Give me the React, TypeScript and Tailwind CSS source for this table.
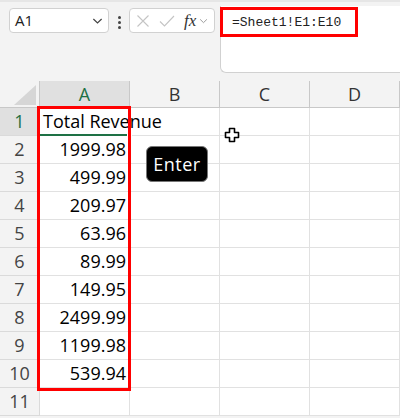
import React from "react";

const cols = ["A", "B", "C", "D"];
const values = ["Total Revenue", "1999.98", "499.99", "209.97", "63.96", "89.99", "149.95", "2499.99", "1199.98", "539.94", ""];

function Chevron({ className }: { className?: string }) {
  return (
    <svg viewBox="0 0 12 8" className={className} fill="none" stroke="currentColor" strokeWidth="1.3">
      <path d="M1.5 1.8 L6 6.2 L10.5 1.8" />
    </svg>
  );
}

export default function App() {
  return (
    <div className="relative w-[400px] h-[418px] overflow-hidden bg-[#f3f3f3] font-['Open_Sans',sans-serif] text-[#000]">
      {/* formula bar area */}
      <div className="h-[81px] flex items-start border-t-2 border-[#e6e6e6]">
        <div className="mt-[6px] ml-[9px] w-[100px] h-[25px] bg-white border border-[#d1d1d1] rounded-[4px] flex items-center justify-between pl-[5px] pr-[5px]">
          <span className="text-[15px] leading-none text-[#222]">A1</span>
          <Chevron className="w-[11px] h-[8px] text-[#444]" />
        </div>
        <div className="mt-[14px] ml-[9px] flex flex-col gap-[2px]">
          <span className="w-[3px] h-[3px] bg-[#444] rounded-full" />
          <span className="w-[3px] h-[3px] bg-[#444] rounded-full" />
          <span className="w-[3px] h-[3px] bg-[#444] rounded-full" />
        </div>
        <div className="mt-[6px] ml-[8px] w-[86px] h-[25px] bg-white border border-[#d1d1d1] rounded-[4px] flex items-center pl-[4px]">
          <svg viewBox="0 0 14 14" className="w-[14px] h-[14px] ml-[2px]" stroke="#c4c4c4" strokeWidth="1.1" fill="none">
            <path d="M1.5 1.5 L12.5 12.5 M12.5 1.5 L1.5 12.5" />
          </svg>
          <svg viewBox="0 0 16 14" className="w-[16px] h-[14px] ml-[9px]" stroke="#c4c4c4" strokeWidth="1.1" fill="none">
            <path d="M1 7.5 L5.5 12 L15 2" />
          </svg>
          <span className="ml-[9px] font-['Liberation_Serif',serif] italic text-[17px] leading-none text-[#333]">fx</span>
          <Chevron className="ml-[3px] w-[9px] h-[6px] text-[#999]" />
        </div>
        <div className="mt-[4px] ml-[5px] flex-1 h-[67px] bg-white border-l border-b border-[#d1d1d1] rounded-bl-[6px] relative">
          <div className="absolute left-[-1px] top-[1px] w-[138px] h-[30px] border-[3px] border-[#ff0000] flex items-center pl-[9px]">
            <span className="font-['Liberation_Mono',monospace] text-[13px] leading-none text-[#222]">=Sheet1!E1:E10</span>
          </div>
        </div>
      </div>

      {/* grid */}
      <div className="grid grid-cols-[40px_90px_90px_90px_90px]">
        <div className="h-[27px] border-r border-b border-[#c8c8c8] relative">
          <svg viewBox="0 0 22 20" className="absolute right-[3px] bottom-[2px] w-[22px] h-[20px]">
            <path d="M22 0 L22 20 L0 20 Z" fill="#d6d6d6" />
          </svg>
        </div>
        {cols.map((c, i) => (
          <div
            key={c}
            className={`h-[27px] border-r border-b border-[#c8c8c8] flex items-center justify-center text-[18px] ${
              i === 0 ? "bg-[#e0e0e0] text-[#1e7145]" : "text-[#333]"
            }`}
          >
            {c}
          </div>
        ))}
        {values.map((v, r) => (
          <React.Fragment key={r}>
            <div
              className={`h-[28px] border-r border-b border-[#dadada] flex items-center justify-center text-[18px] ${
                r === 0 ? "bg-[#e0e0e0] text-[#1e7145]" : "text-[#444]"
              }`}
            >
              {r + 1}
            </div>
            <div
              className={`h-[28px] border-r border-b border-[#e1e1e1] bg-white flex items-center text-[18px] whitespace-nowrap ${
                r === 0 ? "pl-[3px] justify-start overflow-visible relative z-10" : "pr-[3px] justify-end"
              }`}
            >
              {v}
            </div>
            <div className="h-[28px] border-r border-b border-[#e1e1e1] bg-white" />
            <div className="h-[28px] border-r border-b border-[#e1e1e1] bg-white" />
            <div className="h-[28px] border-r border-b border-[#e1e1e1] bg-white" />
          </React.Fragment>
        ))}
      </div>

      {/* active cell bottom edge and fill handle */}
      <div className="absolute left-[40px] top-[134px] w-[89px] h-[2px] bg-[#1e7145] z-20" />
      <div className="absolute left-[127px] top-[133px] w-[5px] h-[5px] bg-[#1e7145] border border-white z-20" />

      {/* red highlight around column A */}
      <div className="absolute left-[37px] top-[106px] w-[94px] h-[285px] border-[3px] border-[#ff0000] z-30" />

      {/* keystroke badge */}
      <div className="absolute left-[146px] top-[146px] w-[62px] h-[36px] bg-black rounded-[6px] border border-[#777] flex items-center justify-center z-30">
        <span className="text-white text-[18px] tracking-[0.5px] leading-none">Enter</span>
      </div>

      {/* cell cursor */}
      <svg viewBox="0 0 16 16" className="absolute left-[224px] top-[127px] w-[16px] h-[16px] z-30">
        <path
          d="M5.5 1.5 H10.5 V5.5 H14.5 V10.5 H10.5 V14.5 H5.5 V10.5 H1.5 V5.5 H5.5 Z"
          fill="white"
          stroke="black"
          strokeWidth="1.6"
          strokeLinejoin="round"
        />
      </svg>
    </div>
  );
}
